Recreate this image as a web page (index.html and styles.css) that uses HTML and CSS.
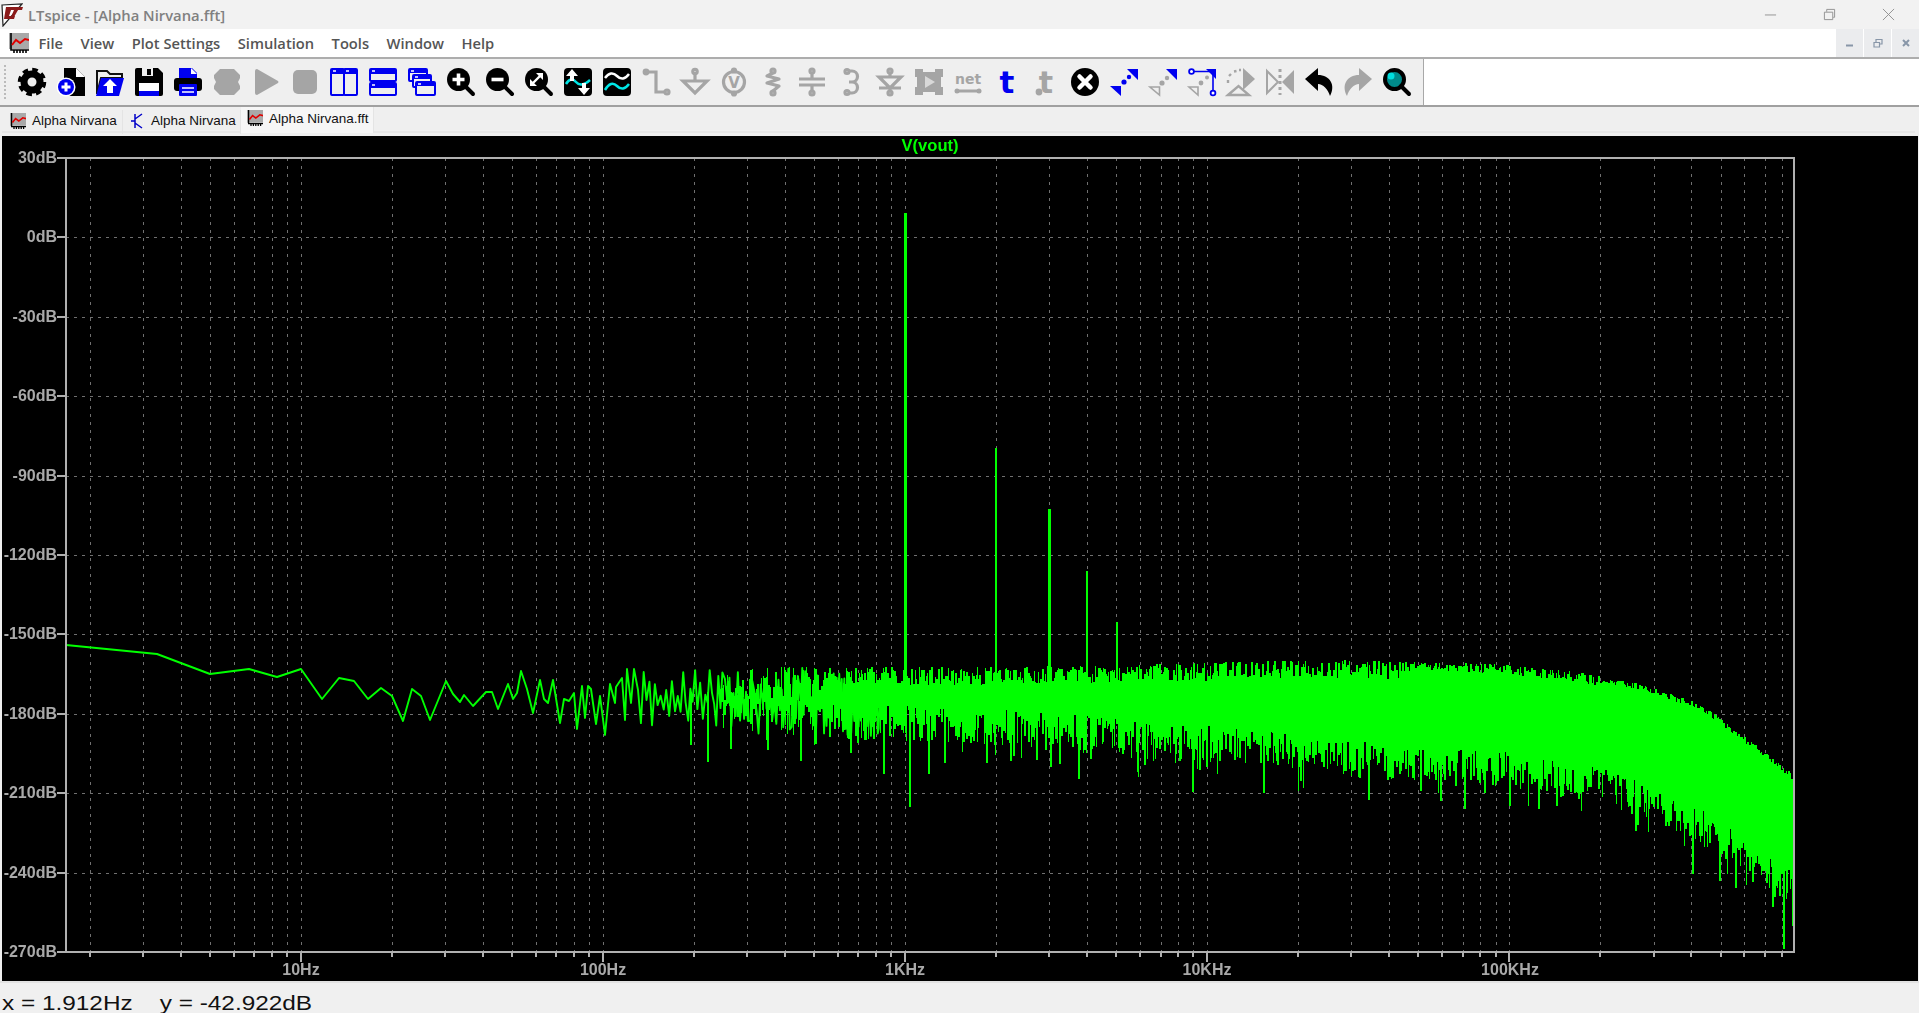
FILE: index.html
```html
<!DOCTYPE html>
<html lang="en">
<head>
<meta charset="utf-8">
<title>LTspice - [Alpha Nirvana.fft]</title>
<link rel="stylesheet" href="styles.css">
</head>
<body>
<svg class="defs" width="0" height="0" aria-hidden="true">
  <symbol id="chart" viewBox="0 0 20 20">
    <rect x="0" y="0" width="20" height="16" fill="#a9a9a9"/>
    <path d="M2 0V17H20M5 17v3M8 17v3M11 17v3M14 17v3M17 17v3" fill="none" stroke="#000" stroke-width="1.6"/>
    <path d="M3 12L7 7L11 10L16 6L20 7" fill="none" stroke="#e00000" stroke-width="2"/>
  </symbol>
</svg>

<header class="titlebar">
  <svg class="logo" viewBox="0 0 22 24">
    <path d="M1 2L21 1L2 23Z" fill="#fff" stroke="#222" stroke-width="1.2"/>
    <path d="M5 4H11L8 13H14L13 16H3ZM10 4H22L21 7H17L13 14H10L13 7H9Z" fill="#8b1a1a"/>
  </svg>
  <span class="titletext">LTspice - [Alpha Nirvana.fft]</span>
  <div class="winctl">
    <svg class="wc" viewBox="0 0 14 14"><path d="M1 7.5H13"/></svg>
    <svg class="wc" viewBox="0 0 14 14"><path d="M1.5 4.5H10.5V12.5H1.5ZM4 4V1.5H12.5V10H11"/></svg>
    <svg class="wc" viewBox="0 0 14 14"><path d="M1 1L13 13M13 1L1 13"/></svg>
  </div>
</header>

<nav class="menubar">
  <svg class="menuicon"><use href="#chart"/></svg>
  <span>File</span><span>View</span><span>Plot Settings</span><span>Simulation</span><span>Tools</span><span>Window</span><span>Help</span>
  <div class="mdi">
    <button class="mdibtn"><svg viewBox="0 0 10 10"><path d="M1 7.5H8" stroke-width="2"/></svg></button>
    <button class="mdibtn"><svg viewBox="0 0 10 10"><path d="M1 4.5H6.5V9H1ZM3 4V1.5H9V6H7" stroke-width="1.2"/></svg></button>
    <button class="mdibtn"><svg viewBox="0 0 10 10"><path d="M2 2L8 8M8 2L2 8" stroke-width="2"/></svg></button>
  </div>
</nav>

<div class="toolbar">
  <div class="tools">
    <i class="gripper"></i>
    <svg class="ic" viewBox="0 0 28 28"><circle cx="14" cy="14" r="8" fill="none" stroke="#000" stroke-width="7"/><circle cx="14" cy="14" r="12" fill="none" stroke="#000" stroke-width="4.5" stroke-dasharray="5.4 4"/></svg>
    <svg class="ic" viewBox="0 0 28 28"><path d="M7 0H19L28 9V28H7Z" fill="#000"/><path d="M19 0V9H28Z" fill="#fff"/><circle cx="9" cy="19" r="9.5" fill="#fff"/><circle cx="9" cy="19" r="8" fill="#0000f0"/><path d="M4.5 19H13.5M9 14.5V23.5" stroke="#fff" stroke-width="3"/></svg>
    <svg class="ic" viewBox="0 0 28 28"><path d="M1 26V3H11L14 6H26V10H5L1 26" fill="none" stroke="#111" stroke-width="2"/><path d="M5 10H28L23 28H0Z" fill="#0000f0"/><path d="M14 11L21 18H17V25H11V18H7Z" fill="#fff"/></svg>
    <svg class="ic" viewBox="0 0 28 28"><path d="M2 0H23L28 5V26Q28 28 26 28H2Q0 28 0 26V2Q0 0 2 0Z" fill="#000"/><rect x="7" y="0" width="11" height="8" fill="#efefef"/><rect x="12" y="1" width="4" height="6" fill="#000"/><rect x="4" y="15" width="20" height="13" fill="#fff"/><rect x="4" y="23" width="20" height="5" fill="#0000f0"/></svg>
    <svg class="ic" viewBox="0 0 28 28"><path d="M5 0H18L23 5V11H5Z" fill="#0000f0"/><path d="M17 0V6H23Z" fill="#fff"/><rect x="0" y="10" width="28" height="13" rx="3" fill="#000"/><rect x="5" y="16" width="18" height="12" rx="1" fill="#0000f0"/><path d="M8 20H20M8 24H20" stroke="#fff" stroke-width="1.6"/></svg>
    <svg class="ic" viewBox="0 0 28 28"><path d="M7 1H21L27 7V10L25 14L27 18V21L21 27H7L1 21V18L3 14L1 10V7Z" fill="#a5a5a5"/></svg>
    <svg class="ic" viewBox="0 0 28 28"><path d="M3 3Q3 1 5 1L26 13Q27 14 26 15L5 27Q3 27 3 25Z" fill="#a5a5a5"/></svg>
    <svg class="ic" viewBox="0 0 28 28"><rect x="2" y="2" width="24" height="24" rx="5" fill="#a5a5a5"/></svg>
    <svg class="ic" viewBox="0 0 28 28"><g fill="none" stroke="#0000f0" stroke-width="2"><rect x="1" y="1" width="13" height="26" rx="1"/><rect x="14" y="1" width="13" height="26" rx="1"/></g><path d="M1 1H27V6H1Z" fill="#0000f0"/><path d="M3 3H6M16 3H19" stroke="#fff" stroke-width="1.5"/></svg>
    <svg class="ic" viewBox="0 0 28 28"><g fill="none" stroke="#0000f0" stroke-width="2"><rect x="1" y="1" width="26" height="12" rx="1"/><rect x="1" y="15" width="26" height="12" rx="1"/></g><path d="M1 1H27V6H1ZM1 15H27V20H1Z" fill="#0000f0"/><path d="M3 3H6M3 17H6" stroke="#fff" stroke-width="1.5"/></svg>
    <svg class="ic" viewBox="0 0 28 28"><g fill="#efefef" stroke="#0000f0" stroke-width="2"><rect x="1" y="1" width="18" height="12" rx="1"/><rect x="5" y="7" width="18" height="12" rx="1"/><rect x="8" y="14" width="19" height="13" rx="1"/></g><path d="M1 1H19V5H1ZM5 7H23V11H5ZM8 14H27V18H8Z" fill="#0000f0"/><path d="M3 3H6M7 9H10M10 16H13" stroke="#fff" stroke-width="1.4"/></svg>
    <svg class="ic" viewBox="0 0 28 28"><circle cx="11.5" cy="11.5" r="11.5" fill="#000"/><path d="M17 17L26 26" stroke="#000" stroke-width="4" stroke-linecap="round"/><path d="M5.5 11.5H17.5M11.5 5.5V17.5" stroke="#fff" stroke-width="3.6"/></svg>
    <svg class="ic" viewBox="0 0 28 28"><circle cx="11.5" cy="11.5" r="11.5" fill="#000"/><path d="M17 17L26 26" stroke="#000" stroke-width="4" stroke-linecap="round"/><path d="M5.5 11.5H17.5" stroke="#fff" stroke-width="3.6"/></svg>
    <svg class="ic" viewBox="0 0 28 28"><circle cx="11.5" cy="11.5" r="11.5" fill="#000"/><path d="M17 17L26 26" stroke="#000" stroke-width="4" stroke-linecap="round"/><path d="M7 16L16 7" stroke="#fff" stroke-width="2.4"/><path d="M5 11V18H12ZM11 5H18V12Z" fill="#fff"/></svg>
    <svg class="ic" viewBox="0 0 28 28"><rect width="28" height="28" rx="4" fill="#000"/><path d="M2 16Q7 8 12 14T26 12" fill="none" stroke="#00e6e6" stroke-width="2.5"/><path d="M8 1L14 8H10V13H6V8H2ZM20 27L14 20H18V15H22V20H26Z" fill="#fff"/></svg>
    <svg class="ic" viewBox="0 0 28 28"><rect width="28" height="28" rx="4" fill="#000"/><path d="M2 10Q8 2 14 8T26 6" fill="none" stroke="#fff" stroke-width="2.5"/><path d="M2 22Q8 12 14 18T26 16" fill="none" stroke="#00e6e6" stroke-width="2.5"/></svg>
    <svg class="ic gy" viewBox="0 0 28 28"><path d="M4 4H14V24H22"/><circle class="f" cx="4" cy="4" r="3.4"/><circle cx="25" cy="24" r="2"/></svg>
    <svg class="ic gy" viewBox="0 0 28 28"><circle cx="14" cy="3.5" r="2.2"/><path d="M14 6V12M2 13H26L14 25Z"/></svg>
    <svg class="ic gy" viewBox="0 0 28 28"><circle cx="14" cy="14" r="10.5"/><circle cx="14" cy="2.5" r="1.5"/><circle cx="14" cy="25.5" r="1.5"/><text class="icontext vsrc" x="14" y="20">V</text></svg>
    <svg class="ic gy" viewBox="0 0 28 28"><circle cx="14" cy="3" r="2"/><circle cx="14" cy="25" r="2"/><path d="M14 5L8 8L20 11L8 15L20 18L14 23" stroke-linejoin="round"/></svg>
    <svg class="ic gy" viewBox="0 0 28 28"><circle cx="14" cy="3" r="2"/><circle cx="14" cy="25" r="2"/><path d="M14 5V10M1 11H27M1 17H27M14 18V23"/></svg>
    <svg class="ic gy" viewBox="0 0 28 28"><circle cx="10" cy="3.5" r="2"/><circle cx="10" cy="24.5" r="2"/><path d="M12 3H15A5 5 0 0 1 15 14H12H15A5 5 0 0 1 15 25H12"/></svg>
    <svg class="ic gy" viewBox="0 0 28 28"><circle cx="14" cy="3" r="2"/><circle cx="14" cy="25" r="2"/><path d="M14 5V9M3 9H25L14 20ZM3 20H25M14 20V23"/></svg>
    <svg class="ic" viewBox="0 0 28 28"><path d="M0 1H8V4H20V1H28V9H26V19H28V27H20V24H8V27H0V19H2V9H0Z" fill="#a5a5a5"/><path d="M10 8V20L20 14Z" fill="#d8d8d8"/></svg>
    <svg class="ic gy" viewBox="0 0 28 28"><text class="icontext net" x="14" y="16">net</text><path d="M3 23H25" stroke-linecap="round"/><circle class="f" cx="3" cy="23" r="2.5"/><circle class="f" cx="25" cy="23" r="2.5"/></svg>
    <svg class="ic" viewBox="0 0 28 28"><text class="icontext bigt" x="14" y="25">t</text></svg>
    <svg class="ic" viewBox="0 0 28 28"><text class="icontext bigt greyt" x="14" y="25">t</text><circle cx="7" cy="24" r="3.4" fill="#a5a5a5"/></svg>
    <svg class="ic" viewBox="0 0 28 28"><circle cx="14" cy="14" r="14" fill="#000"/><path d="M8.5 8.5L19.5 19.5M19.5 8.5L8.5 19.5" stroke="#fff" stroke-width="4.5" stroke-linecap="round"/></svg>
    <svg class="ic" viewBox="0 0 28 28"><path d="M17 1H28V12ZM0 18H11V28Z" fill="#0000f0"/><circle cx="14" cy="14" r="2.6" fill="#0000f0"/><circle cx="19" cy="9" r="2.2" fill="#0000f0"/></svg>
    <svg class="ic" viewBox="0 0 28 28"><path d="M17 1H28V12Z" fill="#0000f0"/><path d="M1 19H10.5V27Z" fill="none" stroke="#a5a5a5" stroke-width="1.6"/><circle cx="13" cy="15" r="2.6" fill="#a5a5a5"/><circle cx="18" cy="10" r="2.2" fill="#a5a5a5"/></svg>
    <svg class="ic" viewBox="0 0 28 28"><path d="M18 1H28V11Z" fill="#0000f0"/><path d="M6 3.5H22M25 6V22" stroke="#0000f0" stroke-width="1.6"/><circle cx="3.5" cy="3.5" r="2.4" fill="#fff" stroke="#0000f0" stroke-width="1.8"/><circle cx="25" cy="25" r="2.4" fill="#fff" stroke="#0000f0" stroke-width="1.8"/><path d="M1 19H10V27Z" fill="none" stroke="#a5a5a5" stroke-width="1.6"/><circle cx="13" cy="15" r="2.4" fill="#a5a5a5"/><circle cx="19" cy="9.5" r="2" fill="#a5a5a5"/></svg>
    <svg class="ic" viewBox="0 0 28 28"><path d="M16 0L28 11L16 22Z" fill="#a5a5a5"/><path d="M1 27L11.5 18L22 27Z" fill="none" stroke="#a5a5a5" stroke-width="2.4"/><path d="M1 15V12M2 8L4 6M7 3.5L9.5 3M12 2H14" stroke="#a5a5a5" stroke-width="2.4"/></svg>
    <svg class="ic" viewBox="0 0 28 28"><path d="M1 3L12 14L1 25Z" fill="none" stroke="#a5a5a5" stroke-width="2"/><path d="M28 2L16 14L28 26Z" fill="#a5a5a5"/><path d="M14 1V27" stroke="#a5a5a5" stroke-width="3" stroke-dasharray="3 3"/></svg>
    <svg class="ic" viewBox="0 0 28 28"><path d="M0 11L13 0V7C25 7 31 17 25 28C23 21 18 16 13 16V23Z" fill="#000"/></svg>
    <svg class="ic" viewBox="0 0 28 28"><path d="M28 11L15 0V7C3 7 -3 17 3 28C5 21 10 16 15 16V23Z" fill="#a5a5a5"/></svg>
    <svg class="ic" viewBox="0 0 28 28"><circle cx="11.5" cy="11.5" r="9.5" fill="#008b8b" stroke="#000" stroke-width="4"/><circle cx="8" cy="8" r="3.5" fill="#00dede"/><path d="M18 18L26 26" stroke="#000" stroke-width="4" stroke-linecap="round"/></svg>
  </div>
</div>

<div class="tabbar">
  <div class="tab"><svg class="tabicon"><use href="#chart"/></svg>Alpha Nirvana</div>
  <div class="tab"><svg class="tabicon tabicon-bjt" viewBox="0 0 16 16"><path d="M5 1V15M1 8H5M5 6L12 1M5 10L12 15" fill="none" stroke="#0000c8" stroke-width="1.5"/></svg>Alpha Nirvana</div>
  <div class="tab tab-active"><svg class="tabicon"><use href="#chart"/></svg>Alpha Nirvana.fft</div>
</div>

<main class="plot">
  <canvas id="trace" class="layer" width="1916" height="846"></canvas>
  <svg class="layer labels" viewBox="2 135 1916 846">
    <text class="ttl" x="930" y="150">V(vout)</text>
    <g class="yl">
      <text x="57" y="162">30dB</text>
      <text x="57" y="241">0dB</text>
      <text x="57" y="321">-30dB</text>
      <text x="57" y="400">-60dB</text>
      <text x="57" y="480">-90dB</text>
      <text x="57" y="559">-120dB</text>
      <text x="57" y="638">-150dB</text>
      <text x="57" y="718">-180dB</text>
      <text x="57" y="797">-210dB</text>
      <text x="57" y="877">-240dB</text>
      <text x="57" y="956">-270dB</text>
    </g>
    <g class="xl">
      <text x="301" y="974">10Hz</text>
      <text x="603" y="974">100Hz</text>
      <text x="905" y="974">1KHz</text>
      <text x="1207" y="974">10KHz</text>
      <text x="1510" y="974">100KHz</text>
    </g>
  </svg>
</main>

<footer class="status"><span class="readout">x = 1.912Hz &nbsp;&nbsp; y = -42.922dB</span></footer>
<script src="chart.js"></script>
</body>
</html>
```
FILE: styles.css
```css
* { box-sizing: border-box; }
html, body { margin: 0; height: 100%; }
body {
  display: flex;
  flex-direction: column;
  height: 1013px;
  overflow: hidden;
  background: #efefef;
  font-family: "Open Sans", "Liberation Sans", sans-serif;
}
.defs { position: absolute; }

.titlebar {
  height: 29px;
  flex: none;
  display: flex;
  align-items: center;
  background: #f2f2f2;
  color: #808080;
  font-size: 14.8px;
  font-weight: 600;
}
.logo { width: 22px; height: 24px; margin-left: 1px; }
.titletext { margin-left: 5px; }
.winctl { margin-left: auto; display: flex; gap: 46px; padding-right: 24px; }
.wc { width: 13px; height: 13px; fill: none; stroke: #8f8f8f; stroke-width: 1; }

.menubar {
  height: 30px;
  flex: none;
  display: flex;
  align-items: center;
  gap: 17.5px;
  padding-left: 9px;
  background: #fff;
  border-bottom: 2px solid #adadad;
  color: #555;
  font-size: 14.7px;
  font-weight: 600;
}
.menuicon { width: 20px; height: 20px; margin-right: -8px; }
.mdi { margin-left: auto; display: flex; gap: 1px; align-self: flex-start; height: 28px; }
.mdibtn {
  width: 27px;
  height: 28px;
  padding: 0;
  border: 0;
  background: #ebecee;
  display: flex;
  align-items: center;
  justify-content: center;
}
.mdibtn svg { width: 10px; height: 10px; fill: none; stroke: #8896a8; }

.toolbar {
  height: 48px;
  flex: none;
  background: #fff;
  border-bottom: 2px solid #a0a0a0;
}
.tools {
  width: 1424px;
  height: 100%;
  display: flex;
  align-items: center;
  gap: 11px;
  padding-left: 18px;
  background: #efefef;
  border-right: 1px solid #a8a8a8;
  position: relative;
}
.gripper {
  position: absolute;
  left: 4px;
  top: 6px;
  bottom: 6px;
  width: 2px;
  background: repeating-linear-gradient(#bbb 0 2px, transparent 2px 4px);
}
.ic { width: 28px; height: 28px; flex: none; overflow: visible; }
.gy { fill: none; stroke: #a5a5a5; stroke-width: 3.2; }
.gy .f { fill: #a5a5a5; stroke: none; }
.icontext { font-family: "DejaVu Sans", sans-serif; font-weight: 700; text-anchor: middle; stroke: none; }
.vsrc { font-size: 15px; fill: #a5a5a5; }
.net { font-size: 14px; fill: #a5a5a5; }
.bigt { font-size: 31px; fill: #0000f0; }
.greyt { fill: #a5a5a5; font-size: 30px; }

.tabbar {
  height: 29px;
  flex: none;
  display: flex;
  align-items: flex-end;
  padding: 0 0 0 5px;
  background: #efefef;
  position: relative;
  font-family: "Liberation Sans", Arial, sans-serif;
  font-size: 13.5px;
  color: #111;
}
.tabbar::after {
  content: "";
  position: absolute;
  left: 2px;
  right: 4px;
  bottom: 3px;
  height: 2px;
  background: #e6e6e6;
}
.tab {
  height: 24px;
  width: 118px;
  display: flex;
  align-items: center;
  gap: 6px;
  padding: 0 0 3px 5px;
  margin-bottom: 2px;
  border-right: 1px solid #e4e4e4;
  position: relative;
  z-index: 1;
}
.tab-active {
  width: 133px;
  height: 26px;
  margin-bottom: 3px;
  padding-bottom: 4px;
  padding-left: 6px;
  background: #f6f6f6;
}
.tabicon { width: 16px; height: 16px; flex: none; }
.tabicon-bjt { margin-left: 2px; margin-right: -1px; }

.plot {
  flex: 1;
  position: relative;
  margin: 0 1px 0 2px;
  background: #000;
  min-height: 0;
}
.layer { position: absolute; left: 0; top: 0; width: 1916px; height: 846px; display: block; }
.labels text { font-family: "Liberation Sans", Arial, sans-serif; font-weight: 700; font-size: 16px; }
.labels .ttl { fill: #00ff00; text-anchor: middle; font-size: 16.6px; }
.yl text { fill: #a9a9a9; text-anchor: end; }
.xl text { fill: #a9a9a9; text-anchor: middle; }

.status {
  height: 32px;
  flex: none;
  padding: 6px 0 0 2px;
  border-top: 2px solid #e2e2e2;
  background: #f0f0f0;
  color: #111;
  font-family: "Liberation Sans", Arial, sans-serif;
  font-size: 21px;
  line-height: 28px;
  white-space: pre;
  overflow: hidden;
}
.readout { display: inline-block; transform: scaleX(1.16); transform-origin: left center; }
```
FILE: chart.js
```js
(function () {
  var ctx = document.getElementById('trace').getContext('2d');
  ctx.translate(-2, -135);
  var L = 66, R = 1794, T = 157, B = 951, DEC = 302.1, X10 = 301;
  var AXIS = '#b0b0b0', GRID = '#707070', GREEN = '#00ff00';

  // grid
  ctx.strokeStyle = GRID;
  ctx.lineWidth = 1;
  ctx.setLineDash([3, 5]);
  var xs = [];
  for (var d = -1; d <= 5; d++) {
    for (var m = 1; m <= 9; m++) {
      var x = Math.round(X10 + (d + Math.log10(m)) * DEC);
      if (x > L + 2 && x < R - 2) {
        xs.push({ x: x, major: m === 1 });
        ctx.beginPath();
        ctx.moveTo(x + 0.5, T);
        ctx.lineTo(x + 0.5, B);
        ctx.stroke();
      }
    }
  }
  var i, ys = [];
  for (i = 0; i <= 10; i++) ys.push(Math.round(T + i * (B - T) / 10));
  ys.slice(1, 10).forEach(function (y) {
    ctx.beginPath();
    ctx.moveTo(L, y + 0.5);
    ctx.lineTo(R, y + 0.5);
    ctx.stroke();
  });
  ctx.setLineDash([]);

  // seeded noise
  var seed = 48271;
  function rnd() {
    seed = (seed * 16807) % 2147483647;
    return seed / 2147483647;
  }
  function lerp(tb, x) {
    for (var j = 1; j < tb.length; j++) {
      if (x <= tb[j][0]) {
        var a = tb[j - 1], b = tb[j];
        return a[1] + (b[1] - a[1]) * (x - a[0]) / (b[0] - a[0]);
      }
    }
    return tb[tb.length - 1][1];
  }

  ctx.strokeStyle = GREEN;
  ctx.fillStyle = GREEN;
  ctx.lineJoin = 'round';

  // low frequency trace
  var low = [[66,644],[157,653],[210,673],[249,668],[277,676],[301,668],[322,698],[339,677],[354,680],[368,698],[381,687],[392,695],[403,720],[412,688],[421,695],[430,719],[446,680],[453,693],[460,701],[464,694],[473,705],[486,691],[492,691],[498,708],[508,683],[513,698],[517,692],[521,670],[527,688],[533,712],[540,679],[544,698],[548,702],[553,679],[560,722],[564,698],[569,700],[574,692],[577,728],[582,685],[585,717],[588,685],[591,688],[596,723],[600,695],[605,734],[610,683],[615,702],[616,686],[622,677],[625,719],[627,668],[631,702],[634,668],[638,689]];
  ctx.lineWidth = 1.9;
  ctx.beginPath();
  low.forEach(function (p, n) { if (n) ctx.lineTo(p[0], p[1]); else ctx.moveTo(p[0], p[1]); });

  var UP = [[640,668],[800,666],[900,666],[1000,666],[1100,664],[1200,662],[1300,659],[1400,660],[1500,663],[1570,670],[1640,683],[1700,703],[1730,725],[1760,748],[1794,775]];
  var LO = [[640,728],[800,736],[900,740],[1000,744],[1100,752],[1224,762],[1347,776],[1400,779],[1500,786],[1600,802],[1650,820],[1700,844],[1730,864],[1760,889],[1794,905]];

  // irregular zig-zag where the points are still resolved
  var zx = 638, up = true;
  while (zx < 880) {
    var frac = Math.min(1, (zx - 640) / 200);
    zx += 2.6 - 1.8 * frac + rnd() * 0.8;
    var mid = (lerp(UP, zx) + lerp(LO, zx)) / 2 + 4 * (rnd() - 0.5);
    var half = (lerp(LO, zx) - lerp(UP, zx)) / 2;
    var amp = half * Math.pow(rnd(), 1.1);
    if (rnd() < 0.82) up = !up;
    ctx.lineTo(zx, mid + (up ? -amp : amp));
  }
  ctx.stroke();

  // dense part, drawn column by column
  function bar(x, w, y0, y1) {
    ctx.fillRect(Math.round(x), Math.round(y0), w, Math.max(1, Math.round(y1 - y0)));
  }
  var cx = 720;
  while (cx < R) {
    var w = rnd() < 0.55 ? 1 : 2;
    var rangeU = cx < 1400 ? 18 : cx < 1600 ? 10 : 6;
    var top = lerp(UP, cx) + rangeU * Math.pow(rnd(), 1.3);
    var bot = lerp(LO, cx) - 36 * Math.pow(rnd(), 1.1);
    if (rnd() < 0.16) bot += 4 + rnd() * 18;
    if (cx < 880 && rnd() > (cx - 720) / 160) {
      var c0 = (top + bot) / 2;
      top = c0 - 6 - rnd() * 8;
      bot = c0 + 6 + rnd() * 8;
    }
    bar(cx, Math.min(w, R - cx), top, bot);
    cx += w;
  }
  // solid core keeps the body of the trace closed
  for (cx = 880; cx < R; cx += 2) {
    bar(cx, Math.min(2, R - cx), lerp(UP, cx) + 20, lerp(LO, cx) - 38);
  }

  // named downward spikes
  [[690,744],[707,761],[730,748],[767,749],[800,760],[850,752],[883,773],[909,806],[928,773],[944,762],[986,762],[1010,760],[1050,766],[1078,778],[1090,758],[1137,771],[1144,764],[1192,791],[1199,769],[1206,766],[1263,792],[1300,780],[1368,799],[1420,790],[1440,800],[1464,808],[1509,805],[1538,808],[1556,805],[1635,830],[1692,873],[1719,880],[1735,887],[1783,948],[1792,925]].forEach(function (s) {
    bar(s[0], 2, lerp(UP, s[0]) + 24, s[1]);
  });

  // harmonics
  bar(904, 3, 212, 700);
  bar(995, 2, 447, 700);
  bar(1048, 3, 508, 700);
  bar(1086, 2, 570, 700);
  bar(1116, 2, 621, 700);

  // frame and ticks
  ctx.fillStyle = AXIS;
  ctx.fillRect(L - 1, T - 1, R - L + 2, 2);
  ctx.fillRect(L - 1, B - 1, R - L + 2, 2);
  ctx.fillRect(L - 1, T - 1, 2, B - T + 2);
  ctx.fillRect(R - 1, T - 1, 2, B - T + 2);
  ys.forEach(function (y) { ctx.fillRect(57, y - 1, 9, 2); });
  xs.forEach(function (t) { ctx.fillRect(t.x - 1, B, 2, t.major ? 10 : 5); });
})();
```
